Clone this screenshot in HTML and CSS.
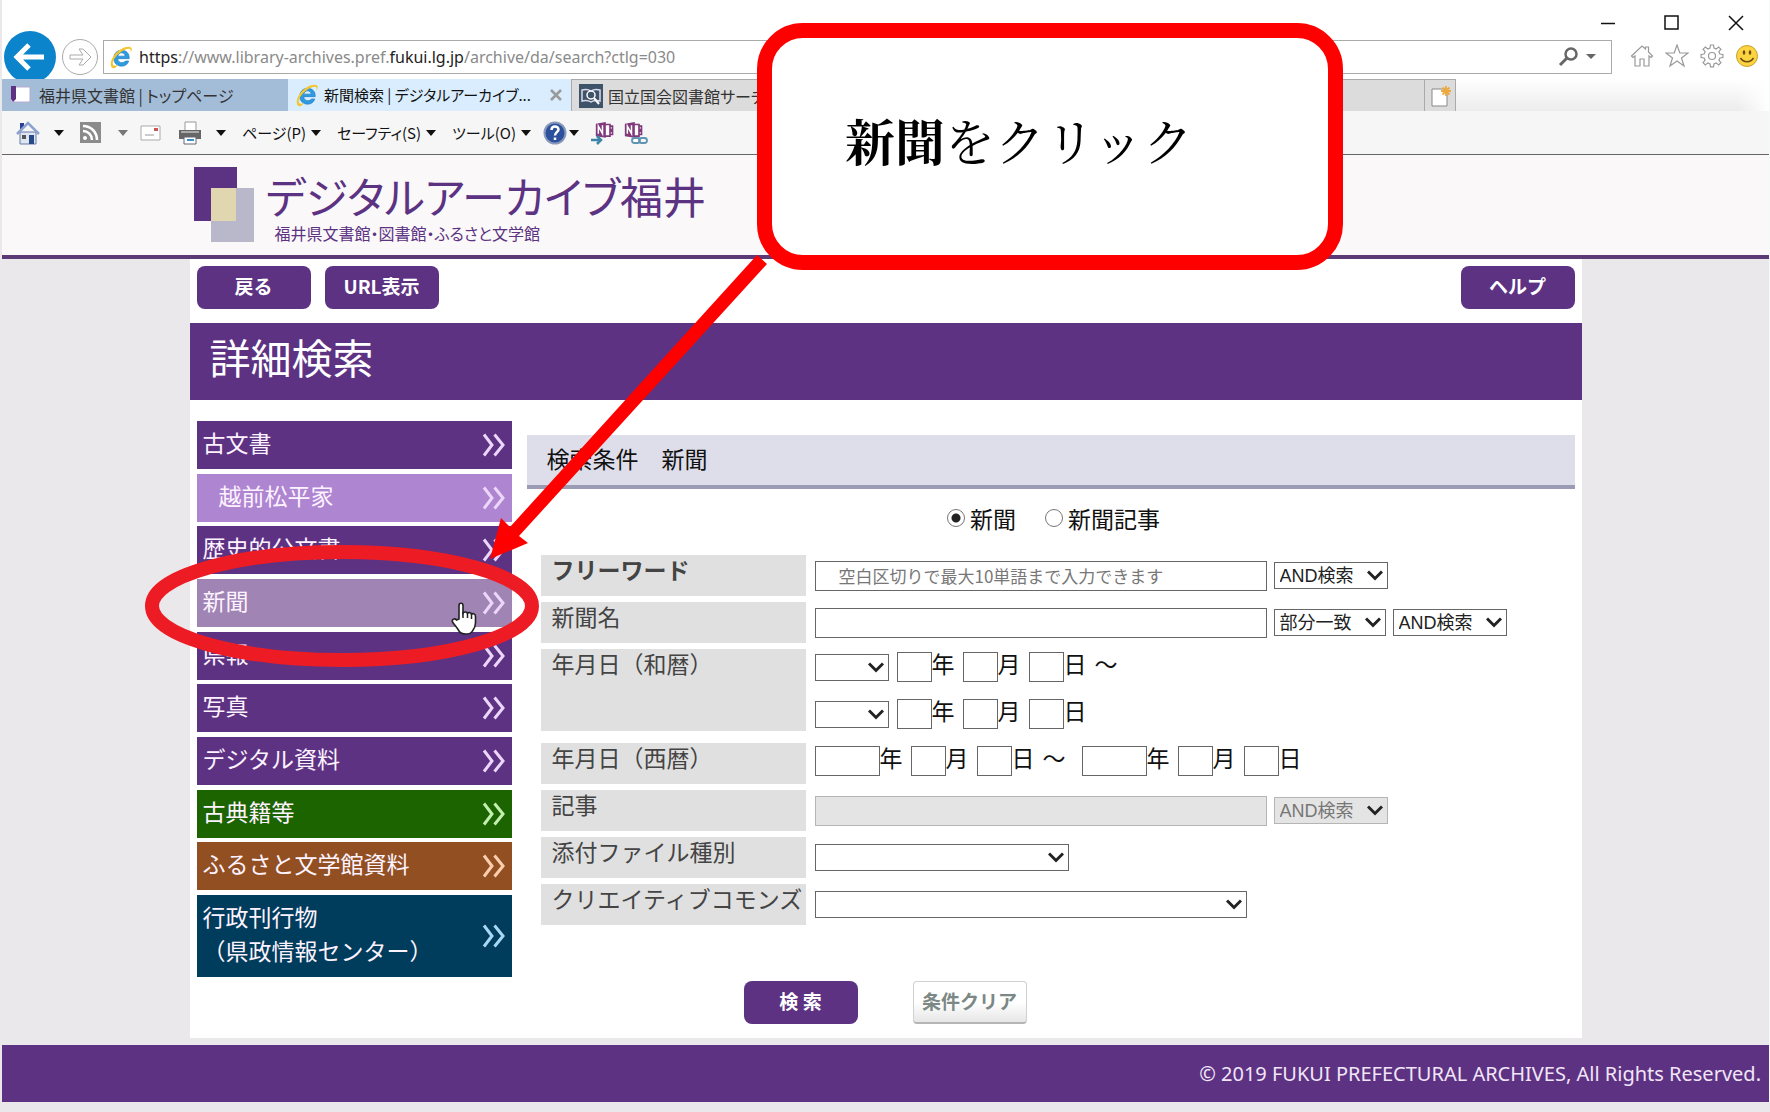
FILE: index.html
```html
<!DOCTYPE html>
<html lang="ja">
<head>
<meta charset="utf-8">
<title>新聞検索 | デジタルアーカイブ福井</title>
<link rel="stylesheet" href="styles.css">
</head>
<body>
<svg class="defs" width="0" height="0" aria-hidden="true">
  <defs>
    <symbol id="ie" viewBox="0 0 22 22">
      <path d="M18.500 12.500H8c.2 2.400 1.700 3.700 3.900 3.700 1.400 0 2.500-.5 3.100-1.500h3.100c-1 3.100-3.300 4.700-6.400 4.700-4.500 0-7.300-3-7.300-7.200s2.800-7.300 7-7.300c4.600 0 7.400 2.900 7.100 7.600zM8.100 10.200h6.700c-.2-1.900-1.400-3-3.300-3-1.800 0-3.100 1.200-3.400 3z" fill="#2e9be0" stroke="#1c7cc4" stroke-width=".6"/>
      <path d="M3.500 21.300C-1.500 18 4 8 10 4.300 15 1 21 .5 20.800 4c0 1.200-.5 2.500-1 3.300.4-2.200.3-3.800-1.500-3.900-4-.2-11.300 5-13.800 10-1.500 3-1.500 5.300.5 5.500 1 .1 2.400-.4 3.300-.9-1.500 2.200-3.500 3.700-4.800 3.300z" fill="#f3c52f"/>
    </symbol>
    <symbol id="chev" viewBox="0 0 24 24">
      <path d="M2 1.500 10 12 2 22.500M12.500 1.500 21 12 12.500 22.500" fill="none" stroke="currentColor" stroke-width="3"/>
    </symbol>
    <symbol id="note" viewBox="0 0 24 24">
      <path d="M9 3h9v14H9zM18 5h3v4h-3zM18 11h3v4h-3z" fill="#fff" stroke="#80397b" stroke-width="2"/>
      <path d="M1 2 13 0v19L1 17z" fill="#80397b"/>
      <path d="M4 14V5l5 9V4" fill="none" stroke="#fff" stroke-width="1.800"/>
    </symbol>
  </defs>
</svg>

<div class="window">
  <div class="titlebar">
    <button type="button" class="icon-button" aria-label="最小化"><svg width="16" height="16"><path d="M1 8.500h14" stroke="#111" stroke-width="1.500"/></svg></button>
    <button type="button" class="icon-button" aria-label="最大化"><svg width="16" height="16"><path d="M1 1h13v13H1z" fill="none" stroke="#111" stroke-width="1.500"/></svg></button>
    <button type="button" class="icon-button" aria-label="閉じる"><svg width="16" height="16"><path d="M1 1 15 15M15 1 1 15" stroke="#111" stroke-width="1.500"/></svg></button>
  </div>

  <div class="address-row">
    <button type="button" class="icon-button" aria-label="戻る"><svg width="54" height="48" viewBox="0 0 54 48"><circle cx="28" cy="26" r="26" fill="#0c84cb"/><path d="M14 26h28M27 14 15 26l12 12" fill="none" stroke="#fff" stroke-width="5"/></svg></button>
    <button type="button" class="icon-button forward" aria-label="進む"><svg width="38" height="38"><circle cx="19" cy="19" r="17.500" fill="#fff" stroke="#aaa"/><path d="M9 17h13l-4-6h4l8 8-8 8h-4l4-6H9z" fill="#fff" stroke="#aaa"/></svg></button>
    <div class="address">
      <svg width="24" height="24"><use href="#ie"/></svg>
      <span class="url"><b>https</b>://www.library-archives.pref.<b>fukui.lg.jp</b>/archive/da/search?ctlg=030</span>
      <svg width="40" height="20"><circle cx="14" cy="7" r="5.500" fill="none" stroke="#666" stroke-width="2.500"/><path d="M10 11 3 18" stroke="#666" stroke-width="3"/><path d="M29 7h10l-5 5z" fill="#666"/></svg>
    </div>
    <div class="tools">
      <svg width="24" height="24" viewBox="0 0 24 24"><path d="M1.500 12 12 2l3.500 3V3h3v5l4 4-1.500 1.500-2-1.500v10h-5v-7h-4v7H5V12l-2 1.500z" fill="none" stroke="#999" stroke-width="1.200"/></svg>
      <svg width="24" height="24" viewBox="0 0 24 24"><path d="m12 1 2.800 8H23l-6.500 5 2.500 8-7-5-7 5 2.500-8L1 9h8.200z" fill="none" stroke="#999" stroke-width="1.200"/></svg>
      <svg width="24" height="24" viewBox="0 0 24 24"><path d="M10.500 1h3l.5 3 2.200 1 2.500-2 2.200 2.200-2 2.500 1 2.300 3 .5v3l-3 .5-1 2.200 2 2.500-2.200 2.200-2.500-2-2.200 1-.5 3h-3l-.5-3-2.200-1-2.500 2-2.200-2.200 2-2.500-1-2.200-3-.5v-3l3-.5 1-2.300-2-2.500L5.300 3l2.500 2L10 4z" fill="none" stroke="#999" stroke-width="1.200"/><circle cx="12" cy="12" r="3.500" fill="none" stroke="#999" stroke-width="1.200"/></svg>
      <svg width="24" height="24" viewBox="0 0 24 24"><circle cx="12" cy="12" r="10.500" fill="#fbd440" stroke="#c9a02c"/><ellipse cx="9" cy="8.500" rx="1.300" ry="2.200" fill="#6b4a12"/><ellipse cx="15" cy="8.500" rx="1.300" ry="2.200" fill="#6b4a12"/><path d="M5.500 14c3 5 10 5 13 0" fill="none" stroke="#6b4a12" stroke-width="1.500"/></svg>
    </div>
  </div>

  <div class="tabs">
    <div class="tab first">
      <svg width="22" height="20"><path d="M1 2h19v15H1z" fill="#fff" stroke="#b9a9d0"/><path d="M1 1h5v13l-3 3-2-3z" fill="#5c3282"/></svg>
      <span>福井県文書館 | トップページ</span>
    </div>
    <div class="tab active">
      <svg width="24" height="24"><use href="#ie"/></svg>
      <span>新聞検索 | デジタルアーカイブ...</span>
      <svg class="close" width="12" height="12"><path d="M1 1 11 11M11 1 1 11" stroke="#999" stroke-width="2.500"/></svg>
    </div>
    <div class="tab other">
      <svg width="24" height="24"><path d="M0 0h24v24H0z" fill="#3f5468"/><path d="M3 6c4-1 6-1 9 1 3-2 5-2 9-1v11c-4-1-6-1-9 1-3-2-5-2-9-1z" fill="none" stroke="#dde" stroke-width="1.500"/><circle cx="12" cy="11" r="4" fill="#3f5468" stroke="#fff" stroke-width="1.500"/><path d="m15 14 5 6" stroke="#fff" stroke-width="2"/></svg>
      <span>国立国会図書館サーチ</span>
    </div>
    <button type="button" class="new-tab" aria-label="新しいタブ"><svg width="22" height="24"><path d="M1 4h15v17H1z" fill="#fff" stroke="#888"/><path d="M15 1v10M10 6h10M11.500 2.500l7 7M18.500 2.500l-7 7" stroke="#eda93c" stroke-width="1.800"/></svg></button>
    <div class="tab-shade"></div>
  </div>

  <div class="toolbar">
    <svg width="24" height="24"><path d="M4 11h16v12H4z" fill="#dfe6f2" stroke="#667ba8"/><path d="M4 2h4v6H4z" fill="#2b3f94"/><path d="M1 13 12 2l11 11" fill="none" stroke="#8ba2cf" stroke-width="2.500"/><path d="M13 14h5v9h-5z" fill="#254a86"/><path d="M6 14h4v4H6z" fill="#555"/></svg>
    <span class="drop"></span>
    <svg class="rss" width="21" height="21"><path d="M0 0h21v21H0z" fill="#8b8b8b"/><circle cx="5" cy="16" r="2" fill="#fff"/><path d="M3 9c5 0 9 4 9 9M3 4c8 0 14 6 14 14" fill="none" stroke="#fff" stroke-width="2.500"/></svg>
    <span class="drop dim"></span>
    <svg width="21" height="16"><path d="M1 1h19v14H1z" fill="#fff" stroke="#aaa"/><path d="M14 3h4v3h-4z" fill="#c55"/><path d="M5 10h9" stroke="#999"/></svg>
    <svg class="print" width="24" height="24"><path d="M7 1h11v9H7z" fill="#fff" stroke="#999"/><path d="M1 9h22v9H1z" fill="#666"/><path d="M3 11h18" stroke="#aaa" stroke-width="2"/><path d="M6 16h12v7H6z" fill="#fff" stroke="#667"/><path d="M9 19h7" stroke="#3b8fc4" stroke-width="2"/></svg>
    <span class="drop"></span>
    <button type="button" class="menu">ページ(P)<span class="drop"></span></button>
    <button type="button" class="menu">セーフティ(S)<span class="drop"></span></button>
    <button type="button" class="menu">ツール(O)<span class="drop"></span></button>
    <button type="button" class="menu help" aria-label="ヘルプ"><svg width="24" height="24"><circle cx="12" cy="12" r="10.500" fill="#2c4f9e" stroke="#8898b8" stroke-width="2"/><path d="M8.500 9c0-5 7-4.500 7-.5 0 2.500-3.500 3-3.500 6M12 16.500v2.500" fill="none" stroke="#fff" stroke-width="2.500"/></svg><span class="drop"></span></button>
    <svg class="note" width="24" height="26"><use href="#note" x="4" y="2" width="20" height="20"/><path d="M0 20h9M6 16l4 4-4 4" fill="none" stroke="#3d86a8" stroke-width="2.500"/></svg>
    <svg width="24" height="26"><use href="#note" y="2" width="20" height="20"/><rect x="8" y="18" width="8" height="5" rx="2.500" fill="#fff" stroke="#5f93b4" stroke-width="1.800"/><rect x="15" y="18" width="8" height="5" rx="2.500" fill="none" stroke="#5f93b4" stroke-width="1.800"/></svg>
  </div>

  <header class="site-header">
    <div class="wrap brand">
      <svg width="60" height="75"><path d="M0 0h43v54H0z" fill="#5c3282"/><path d="M17 21h43v54H17z" fill="#b9b8ca"/><path d="M17 21h25v33H17z" fill="#e0d7b0"/></svg>
      <div class="brand-text">
        <div class="brand-name">デジタルアーカイブ福井</div>
        <div class="brand-sub">福井県文書館・図書館・ふるさと文学館</div>
      </div>
    </div>
  </header>

  <main class="wrap page">
    <div class="page-buttons">
      <button type="button" class="btn">戻る</button>
      <button type="button" class="btn">URL表示</button>
      <button type="button" class="btn right">ヘルプ</button>
    </div>
    <h1>詳細検索</h1>
    <div class="columns">
      <nav class="side">
        <a href="#">古文書<svg width="24" height="24"><use href="#chev"/></svg></a>
        <a href="#" class="sub">越前松平家<svg width="24" height="24"><use href="#chev"/></svg></a>
        <a href="#">歴史的公文書<svg width="24" height="24"><use href="#chev"/></svg></a>
        <a href="#" class="current">新聞<svg width="24" height="24"><use href="#chev"/></svg></a>
        <a href="#">県報<svg width="24" height="24"><use href="#chev"/></svg></a>
        <a href="#">写真<svg width="24" height="24"><use href="#chev"/></svg></a>
        <a href="#">デジタル資料<svg width="24" height="24"><use href="#chev"/></svg></a>
        <a href="#" class="green">古典籍等<svg width="24" height="24"><use href="#chev"/></svg></a>
        <a href="#" class="brown">ふるさと文学館資料<svg width="24" height="24"><use href="#chev"/></svg></a>
        <a href="#" class="navy"><span>行政刊行物<br>（県政情報センター）</span><svg width="24" height="24"><use href="#chev"/></svg></a>
      </nav>

      <form class="search" id="search">
        <h2>検索条件　新聞</h2>
        <div class="kinds">
          <label><input type="radio" name="kind" checked>新聞</label>
          <label><input type="radio" name="kind">新聞記事</label>
        </div>
        <div class="fields">
          <label class="name strong" for="free">フリーワード</label>
          <div class="controls">
            <input id="free" class="long" type="text" placeholder="空白区切りで最大10単語まで入力できます">
            <select aria-label="フリーワードの検索方法"><option>AND検索</option></select>
          </div>

          <label class="name" for="paper">新聞名</label>
          <div class="controls">
            <input id="paper" class="long" type="text">
            <select class="match" aria-label="一致方法"><option>部分一致</option></select>
            <select aria-label="新聞名の検索方法"><option>AND検索</option></select>
          </div>

          <label class="name double" for="era1">年月日（和暦）</label>
          <div class="date-rows">
            <div class="controls date">
              <select id="era1" class="era"><option></option></select>
              <label><input class="two" type="text">年</label>
              <label><input class="two" type="text">月</label>
              <label><input class="two" type="text">日</label>
              <span>～</span>
            </div>
            <div class="controls date">
              <select class="era" aria-label="終了の元号"><option></option></select>
              <label><input class="two" type="text">年</label>
              <label><input class="two" type="text">月</label>
              <label><input class="two" type="text">日</label>
            </div>
          </div>

          <label class="name" for="year1">年月日（西暦）</label>
          <div class="controls date">
            <label><input id="year1" class="four" type="text">年</label>
            <label><input class="two" type="text">月</label>
            <label><input class="two" type="text">日</label>
            <span class="to">～</span>
            <label><input class="four" type="text">年</label>
            <label><input class="two" type="text">月</label>
            <label><input class="two" type="text">日</label>
          </div>

          <label class="name" for="article">記事</label>
          <div class="controls">
            <input id="article" class="long" type="text" disabled>
            <select aria-label="記事の検索方法" disabled><option>AND検索</option></select>
          </div>

          <label class="name" for="file">添付ファイル種別</label>
          <div class="controls"><select id="file" class="mid"><option></option></select></div>

          <label class="name" for="cc">クリエイティブコモンズ</label>
          <div class="controls"><select id="cc" class="wide"><option></option></select></div>
        </div>
      </form>
    </div>
    <div class="actions">
      <button type="submit" form="search" class="btn">検 索</button>
      <button type="reset" form="search" class="btn clear">条件クリア</button>
    </div>
  </main>

  <footer>© 2019 FUKUI PREFECTURAL ARCHIVES, All Rights Reserved.</footer>
</div>

<svg class="overlay" width="560" height="700" aria-hidden="true">
  <ellipse cx="342" cy="606" rx="190" ry="54" fill="none" stroke="#ed1c24" stroke-width="14"/>
  <g transform="translate(451 602)">
    <path d="M8 17V3.500C8 .5 12 .5 12 3.500V11c1-1.500 4-1.500 4.500.5 1-1.500 3.500-1.200 4 .8 1.500-1.300 4-.5 4 2V21c0 4-1.500 6-3 8-2 4-11 4-13.500 0C6 25.500 3.500 23 1.500 20 .5 17 4 16 5.500 18z" fill="#fff" stroke="#222" stroke-width="1.600"/>
    <path d="M12 10v6M16.500 11.500V16M20.500 12.500V17" stroke="#222" stroke-width="1.500"/>
  </g>
</svg>
<svg class="overlay" width="800" height="600" aria-hidden="true">
  <path d="M757 255 767 264 519 536 528 543 490 559 501 518 510 527z" fill="#f00"/>
</svg>
<div class="callout"><strong>新聞</strong>をクリック</div>
</body>
</html>
```
FILE: styles.css
```css
* { box-sizing: border-box; }

body {
  margin: 0;
  position: relative;
  min-height: 100vh;
  background: #ebe8eb;
  color: #111;
  font: 23px/34px "Noto Sans CJK JP", "Noto Sans", sans-serif;
}
svg { display: block; flex: none; }
.defs { position: absolute; }
button, input, select { font: inherit; margin: 0; }
.icon-button, .menu, .new-tab { padding: 0; border: 0; background: none; }

.window { padding-left: 2px; background: #ebe8eb; border-right: 1px solid #f2fafa; }
.wrap { width: 100%; max-width: 1392px; margin: 0 auto; }

/* browser frame */
.titlebar {
  display: flex; justify-content: flex-end; align-items: flex-end; gap: 48px;
  height: 31px; padding-right: 25px; background: #fff;
}
.address-row {
  display: flex; align-items: center; height: 48px; padding: 0 10px 0 0; background: #fff;
}
.address-row .forward { margin: 4px 4px 0 5px; }
.address {
  flex: 1; display: flex; align-items: center; gap: 6px; height: 34px;
  margin: 4px 18px 0 0; padding: 0 14px 0 5px; border: 1px solid #aaa; min-width: 0;
}
.url { flex: 1; font: 16px/30px "Noto Sans", sans-serif; color: #8a8a8a; white-space: nowrap; overflow: hidden; }
.url b { font-weight: 400; color: #222; }
.tools { display: flex; gap: 11px; padding-top: 2px; }

.tabs { display: flex; height: 32px; background: #fff; }
.tab, .toolbar, .menu, .brand-text { font-feature-settings: "palt"; }
.tab {
  display: flex; align-items: center; gap: 5px; padding: 0 9px 0 7px;
  font-size: 16px; line-height: 32px; white-space: nowrap; overflow: hidden; color: #333;
}
.tab.first { flex: 0 0 286px; gap: 7px; padding-left: 8px; background: #a3bdd8; }
.tab.active { flex: 0 0 283px; background: #d9edfe; color: #111; font-size: 15px; }
.tab .close { margin-left: auto; }
.tab.other { flex: 0 0 853px; background: #dcdcdc; border: 1px solid #aaa; border-width: 1px 0 0 1px; }
.new-tab { flex: 0 0 32px; padding: 3px 0 0 6px; background: #dcdcdc; border: 1px solid #aaa; border-bottom: 0; }
.tab-shade { flex: 1; background: linear-gradient(to right, transparent 90%, #fff), linear-gradient(#fff, #ececec); }

.toolbar {
  display: flex; align-items: center; height: 44px; padding: 0 14px;
  background: #f6f6f6; border-bottom: 1px solid #666; font-size: 15px;
}
.drop { flex: none; width: 10px; margin-left: 14px; border: 5px solid transparent; border-top: 6px solid #111; border-bottom: 0; }
.dim { border-top-color: #777; margin: 0 12px 0 17px; }
.rss { margin-left: 16px; }
.print { margin-left: 17px; }
.menu { display: flex; align-items: center; margin-left: 16px; color: #111; }
.menu .drop { margin-left: 5px; }
.menu.help .drop { margin-left: 2px; }
.menu.help { margin-left: 12px; }
.note { margin: 0 9px 0 12px; }

/* site header */
.site-header { background: #faf8f9; border-bottom: 4px solid #5c3a76; }
.brand { display: flex; align-items: flex-start; gap: 12px; padding: 12px 4px; height: 100px; }
.brand-text { color: #5c3282; }
.brand-name { font-size: 43px; line-height: 56px; }
.brand-sub { padding-left: 9px; font-size: 16px; line-height: 20px; }

/* page */
.page { background: #fff; padding-bottom: 14px; }
.page-buttons { display: flex; gap: 14px; padding: 7px 7px 14px; }
.btn {
  width: 114px; height: 43px; padding: 0 0 3px; border: 0; border-radius: 8px;
  background: #5d3283; color: #fff; font-size: 19px; font-weight: 700; line-height: 30px;
}
.right { margin-left: auto; }
h1 { margin: 0; padding: 5px 20px 16px; background: #5d3283; color: #fff; font-size: 41px; font-weight: 400; line-height: 56px; }

.columns { display: grid; grid-template-columns: 315px 1fr; gap: 15px; padding: 21px 7px 4px; }
.side { display: flex; flex-direction: column; justify-content: space-between; min-height: 556px; }
.side a {
  display: flex; align-items: flex-start; justify-content: space-between;
  padding: 4px 6px 10px; background: #5d3283; color: #fdf3ff; text-decoration: none;
}
.side svg { margin-top: 8px; color: #ecd6fb; }
.side .sub { padding-left: 22px; background: #ae85d1; }
.side .current { background: #a084b4; }
.side .green { background: #1b6400; }
.side .green svg { color: #c3efb0; }
.side .brown { background: #914f22; }
.side .brown svg { color: #fbcfae; }
.side .navy { background: #003c5c; }
.side .navy svg { margin-top: 25px; color: #a9d8f4; }

.search { padding-top: 14px; }
h2 {
  margin: 0; padding: 6px 20px 10px; background: #dedeea; border-bottom: 4px solid #9c9bb5;
  font-size: 23px; font-weight: 400; line-height: 34px;
}
.kinds { display: flex; justify-content: center; gap: 29px; padding: 12px 0 0 6px; }
.kinds label { display: flex; align-items: center; gap: 5px; }
input[type="radio"] {
  appearance: none; width: 18px; height: 18px; border: 1px solid #777; border-radius: 50%; background: #fff;
}
input[type="radio"]:checked { background: radial-gradient(circle, #222 0 4px, #fff 5px); }

.fields { display: grid; grid-template-columns: 265px 1fr; gap: 6px 9px; padding: 20px 0 0 14px; }
.name { min-height: 41px; padding: 0 11px; background: #e0e0e0; color: #444; line-height: 28px; white-space: nowrap; }
.strong { font-weight: 700; }
.double { margin-bottom: 6px; }
.controls { display: flex; align-items: center; gap: 7px; height: 41px; }
.date-rows { display: grid; gap: 6px; }
.date { gap: 8px; padding-bottom: 5px; line-height: 22px; }
.date label, .date span { display: flex; align-items: flex-start; height: 30px; }
.date .to { margin-right: 8px; }
.controls input, .controls select { border: 1px solid #666; border-radius: 0; background-color: #fff; color: #222; }
.controls input { height: 30px; padding: 0 23px; font-size: 17px; }
.controls input::placeholder { color: #777; }
.long { width: 452px; }
.controls .two { width: 35px; padding: 0 4px; }
.controls .four { width: 65px; padding: 0 4px; }
select {
  appearance: none; width: 114px; height: 27px; padding: 0 24px 0 5px;
  font-family: "Liberation Sans", "Noto Sans CJK JP", sans-serif; font-size: 18px; line-height: 24px;
  background: #fff url("data:image/svg+xml,%3Csvg xmlns='http://www.w3.org/2000/svg' width='16' height='11'%3E%3Cpath d='M1 1.500 8 8.500 15 1.500' fill='none' stroke='%23222' stroke-width='3'/%3E%3C/svg%3E") no-repeat right 4px center;
}
.match { width: 112px; }
.era { width: 74px; }
.mid { width: 254px; }
.wide { width: 432px; }
.controls input:disabled, .controls select:disabled { background-color: #e4e4e4; border-color: #b5b5b5; color: #777; opacity: 1; }

.actions { display: flex; gap: 55px; padding-left: 554px; }
.clear { border: 1px solid #d0d0d0; border-bottom: 2px solid #b5b5b5; border-radius: 4px; background: linear-gradient(#fff 50%, #e6e6e6); color: #7c8885; }

footer {
  margin-top: 7px; padding: 11px 8px; background: #5d3283; color: #f1e6f7;
  font: 20px/35px "Noto Sans", sans-serif; text-align: right;
}

/* annotations laid over the page */
.overlay { position: absolute; left: 0; top: 0; pointer-events: none; }
.callout {
  position: absolute; left: 757px; top: 23px; width: 586px; height: 247px;
  padding: 73px; border: 15px solid #f00; border-radius: 46px; background: #fff;
  font: 50px/56px "Noto Serif CJK JP", "Noto Sans CJK JP", serif; color: #000; white-space: nowrap;
}
```
